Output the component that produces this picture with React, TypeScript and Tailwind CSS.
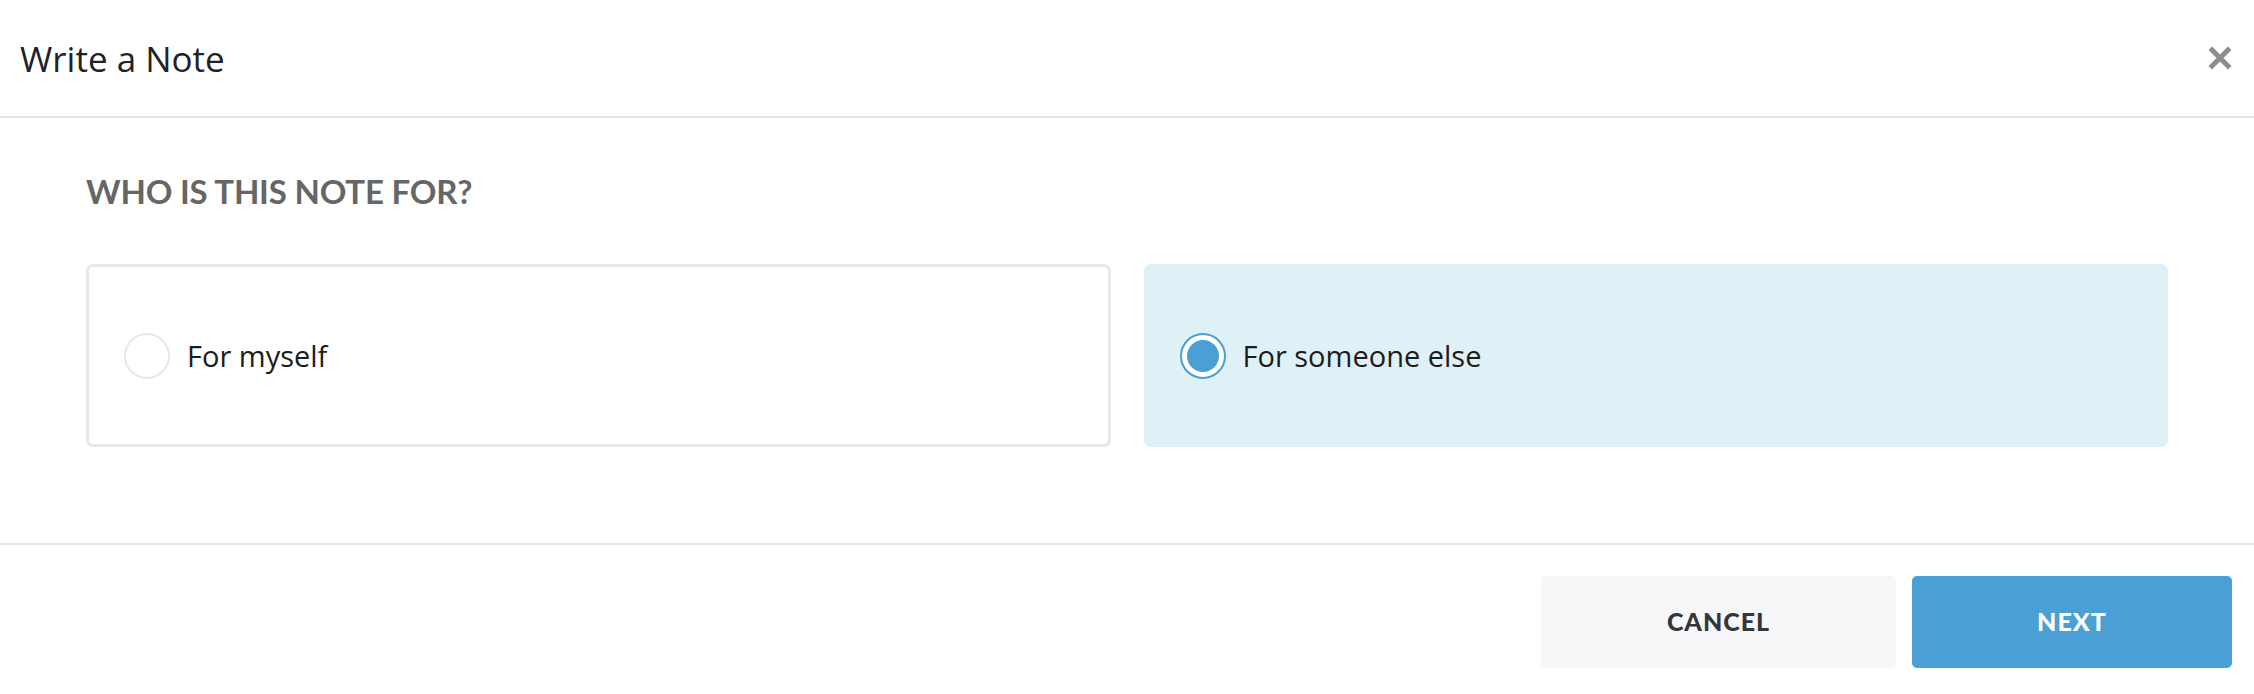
import { useState } from 'react'

const options = [
  { id: 'self', label: 'For myself' },
  { id: 'other', label: 'For someone else' },
]

function Radio({ checked }: { checked: boolean }) {
  if (checked) {
    return (
      <span className="flex h-[46px] w-[46px] shrink-0 items-center justify-center rounded-full border-2 border-[#4a9fd4] bg-white">
        <span className="h-[32px] w-[32px] rounded-full bg-[#4a9fd4]" />
      </span>
    )
  }
  return <span className="h-[46px] w-[46px] shrink-0 rounded-full border-2 border-[#e8e8e8] bg-white" />
}

export default function App() {
  const [selected, setSelected] = useState('other')

  return (
    <div className="flex h-[694px] w-full flex-col bg-white font-['Lato',sans-serif] text-[#222]">
      {/* Header */}
      <div className="flex h-[118px] shrink-0 items-center justify-between border-b-2 border-[#e1e5ea] pl-[20px] pr-[21px]">
        <h2 className="font-['Open_Sans',sans-serif] text-[35px] leading-none text-[#1f2226]">Write a Note</h2>
        <button className="flex h-[26px] w-[26px] items-center justify-center text-[#8c8c8c]">
          <svg viewBox="0 0 24 24" className="h-[26px] w-[26px]" fill="none" stroke="currentColor" strokeWidth="4.5" strokeLinecap="butt">
            <path d="M3 3 L21 21 M21 3 L3 21" />
          </svg>
        </button>
      </div>

      {/* Body */}
      <div className="flex-1 px-[86px] pt-[57px]">
        <h3 className="text-[33px] font-bold uppercase leading-none tracking-[-0.2px] text-[#666]">Who is this note for?</h3>
        <div className="mt-[56px] grid grid-cols-2 gap-[33px]">
          {options.map((opt) => {
            const checked = selected === opt.id
            return (
              <button
                key={opt.id}
                onClick={() => setSelected(opt.id)}
                className={
                  checked
                    ? 'flex h-[183px] items-center gap-[17px] rounded-[7px] border-[3px] border-transparent bg-[#dff0f7] pl-[33px] text-left'
                    : 'flex h-[183px] items-center gap-[17px] rounded-[7px] border-[3px] border-[#e6e7e8] bg-white pl-[35px] text-left'
                }
              >
                <Radio checked={checked} />
                <span className="font-['Open_Sans',sans-serif] text-[29px] text-[#1c1c1c]">{opt.label}</span>
              </button>
            )
          })}
        </div>
      </div>

      {/* Footer */}
      <div className="flex h-[151px] shrink-0 items-start justify-end gap-[16px] border-t-2 border-[#e1e5ea] pr-[22px] pt-[31px]">
        <button className="h-[92px] w-[355px] rounded-[5px] bg-[#f6f7f9] text-[25px] font-black uppercase tracking-[1px] text-[#33363b]">
          Cancel
        </button>
        <button className="h-[92px] w-[320px] rounded-[5px] bg-[#4a9fd4] text-[25px] font-black uppercase tracking-[1px] text-white">
          Next
        </button>
      </div>
    </div>
  )
}
